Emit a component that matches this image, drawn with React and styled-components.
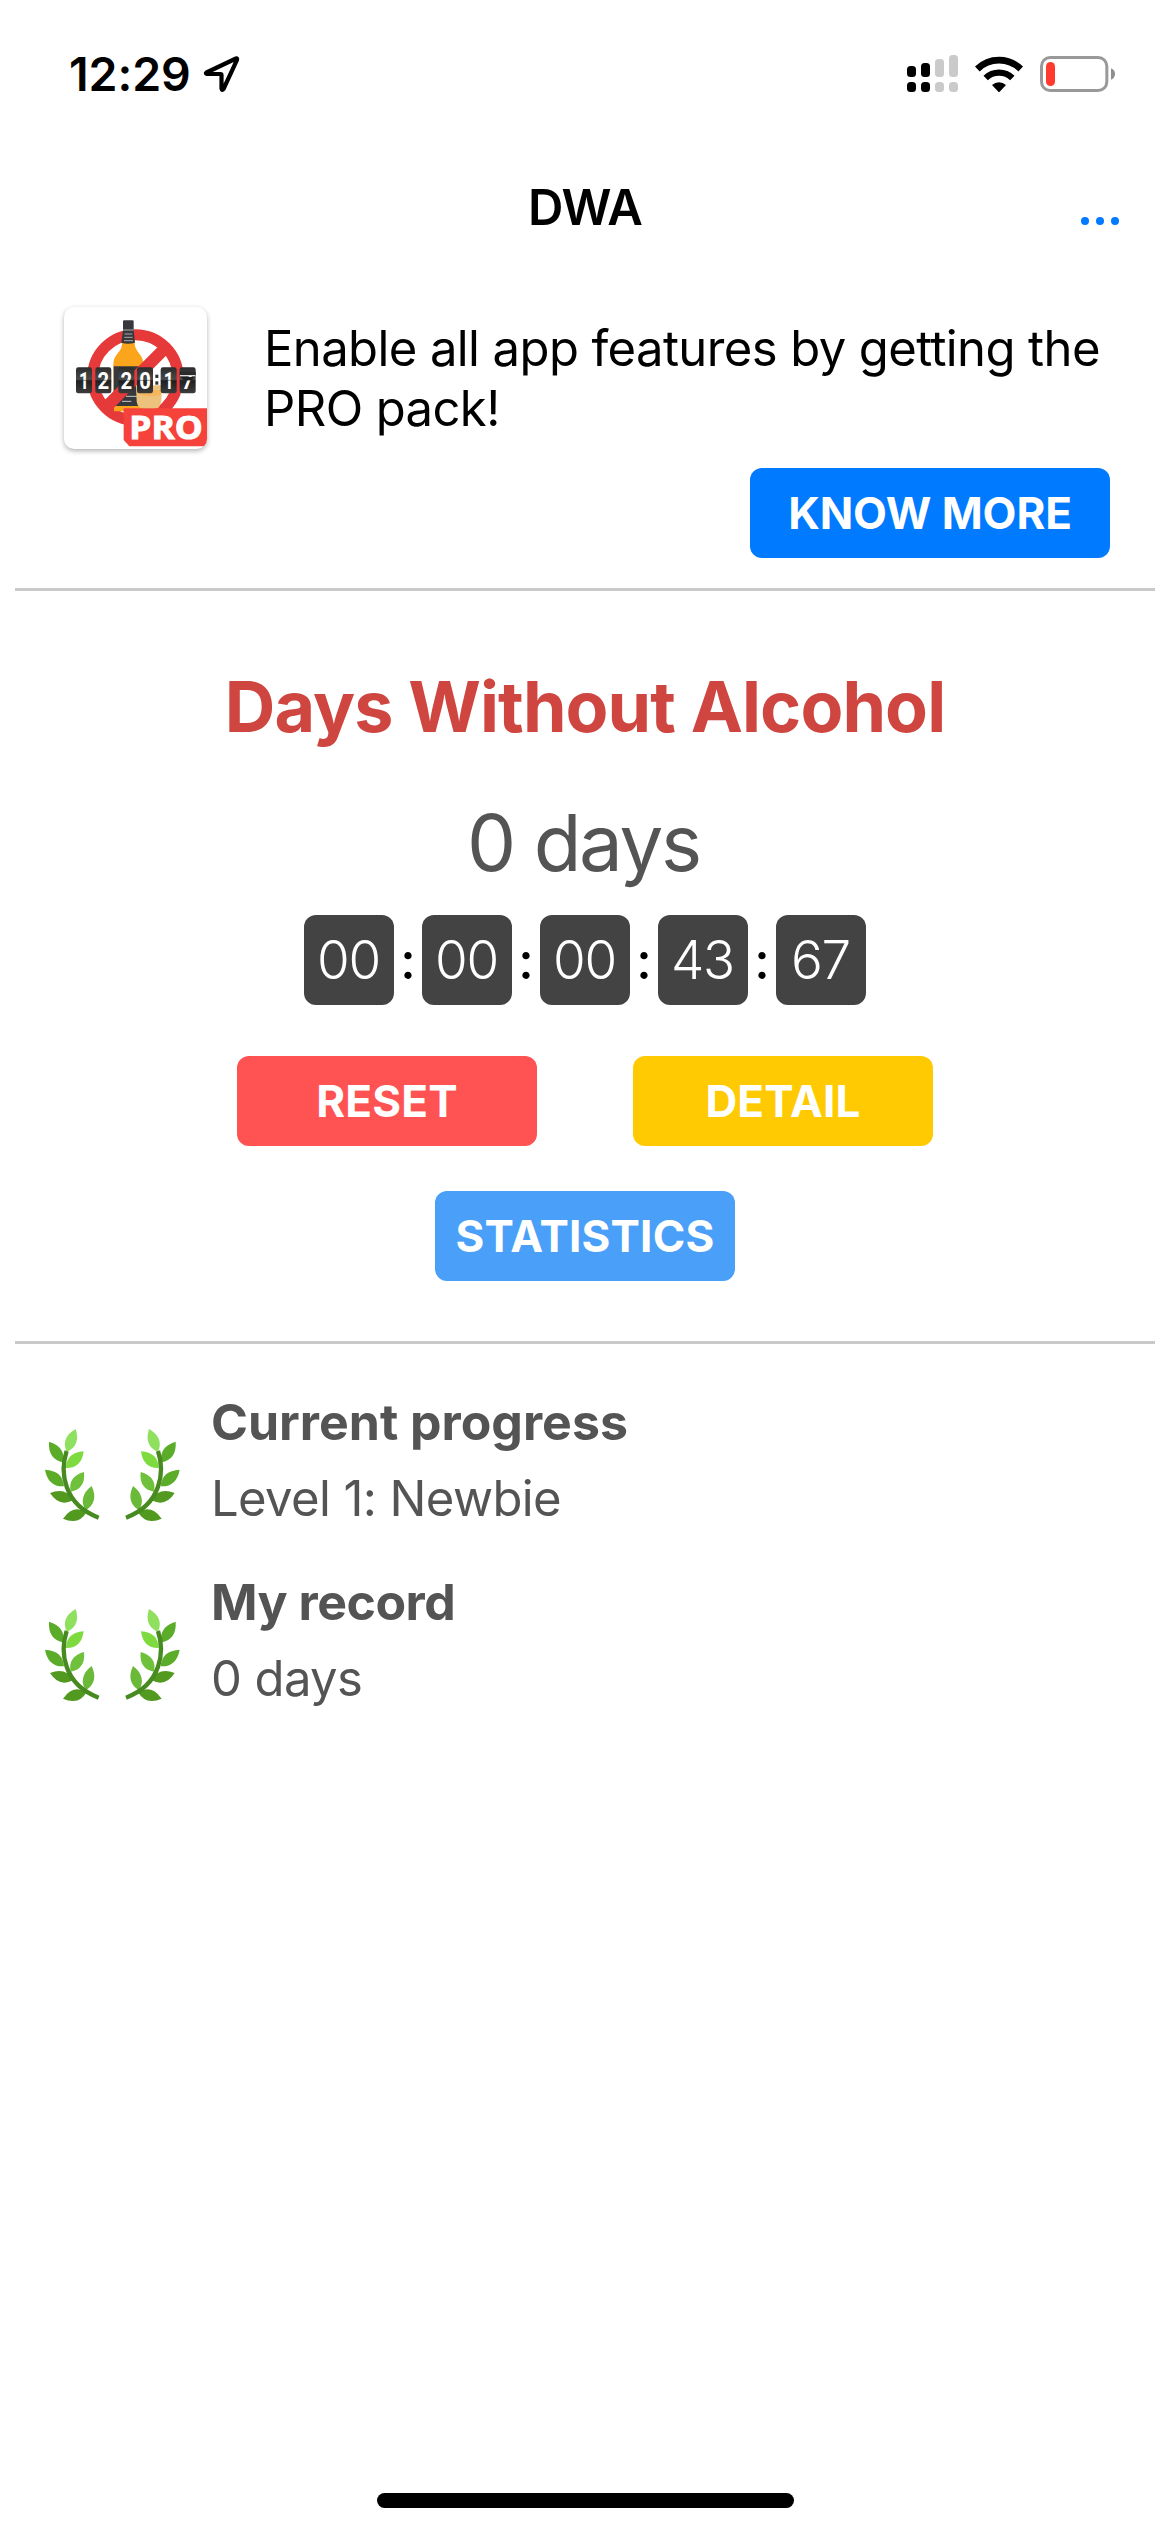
import React from "react";
import styled, { createGlobalStyle } from "styled-components";

const GlobalStyle = createGlobalStyle`
  * {
    box-sizing: border-box;
  }

  body {
    margin: 0;
    background-color: #fff;
    font-family: Inter, "Liberation Sans", sans-serif;
  }
`;

const Screen = styled.div`
  width: 1170px;
  height: 2532px;
  display: flex;
  flex-direction: column;
  background-color: #fff;
  color: #000;
  overflow: hidden;
`;

const StatusBar = styled.header`
  height: 150px;
  padding: 44px 54px 0 69px;
  display: flex;
  justify-content: space-between;
  align-items: flex-start;
`;

const StatusGroup = styled.div`
  height: 60px;
  display: flex;
  align-items: center;
`;

const IconGroup = styled(StatusGroup)`
  svg:nth-child(2) {
    margin-left: 16px;
  }
  svg:nth-child(3) {
    margin-left: 17px;
  }
`;

const Clock = styled.span`
  width: 134px;
  font-size: 46.5px;
  font-weight: 600;
  line-height: 61px;
  letter-spacing: -0.1px;
  white-space: nowrap;
`;

const NavBar = styled.nav`
  height: 132px;
  padding: 0 51px;
  display: grid;
  grid-template-columns: 1fr auto 1fr;
`;

const NavTitle = styled.h1`
  grid-column: 2;
  margin: 28px 0 0;
  font-size: 49px;
  font-weight: 600;
  line-height: 60px;
  letter-spacing: -1px;
`;

const MoreButton = styled.button`
  justify-self: end;
  height: 9px;
  margin-top: 67px;
  padding: 0;
  display: flex;
  gap: 7px;
  border: 0;
  background: none;
`;

const Dot = styled.i`
  width: 8px;
  height: 8px;
  border-radius: 50%;
  background-color: #007aff;
`;

const Promo = styled.section`
  height: 309px;
  margin: 0 15px;
  padding: 25px 45px 0 49px;
  display: flex;
  align-items: flex-start;
  border-bottom: 3px solid #cacaca;
`;

const AppIcon = styled.div`
  width: 143px;
  height: 142px;
  border-radius: 10px;
  background-color: #fff;
  box-shadow: 0 2px 5px rgba(0, 0, 0, 0.3);
  flex: none;
  overflow: hidden;
`;

const PromoBody = styled.div`
  flex: 1;
  margin-left: 57px;
  display: flex;
  flex-direction: column;
`;

const PromoText = styled.p`
  margin: 12px 0 0;
  font-size: 49px;
  line-height: 60px;
  letter-spacing: -0.6px;
  white-space: nowrap;
`;

const Button = styled.button`
  width: ${(props) => props.$width || 300}px;
  height: 90px;
  padding: 0;
  border: 0;
  border-radius: 12px;
  background-color: ${(props) => props.$color};
  color: #fff;
  font-family: inherit;
  font-size: 44px;
  font-weight: 700;
  line-height: 90px;
  letter-spacing: 0.2px;
  white-space: nowrap;
`;

const KnowMore = styled(Button)`
  align-self: flex-end;
  margin-top: 29px;
  letter-spacing: -0.1px;
`;

const Counter = styled.section`
  height: 753px;
  margin: 0 15px;
  display: flex;
  flex-direction: column;
  align-items: center;
  border-bottom: 3px solid #cacaca;
`;

const Title = styled.h2`
  margin: 71px 0 0;
  color: #cf4640;
  font-size: 70px;
  font-weight: 700;
  line-height: 90px;
  letter-spacing: -0.9px;
  white-space: nowrap;
`;

const Days = styled.p`
  margin: 41px 0 0;
  padding-right: 3px;
  color: #545454;
  font-size: 78px;
  line-height: 100px;
  letter-spacing: -2.3px;
`;

const Timer = styled.div`
  height: 90px;
  margin-top: 22px;
  display: flex;
`;

const Digits = styled.span`
  width: 90px;
  height: 90px;
  padding-right: 1px;
  border-radius: 12px;
  background-color: #434343;
  color: #fff;
  font-size: 53px;
  font-weight: 350;
  line-height: 91px;
  letter-spacing: -1.3px;
  text-align: center;
`;

const Colon = styled.span`
  width: 28px;
  font-size: 51px;
  font-weight: 500;
  line-height: 92px;
  display: flex;
  justify-content: center;
`;

const ButtonRow = styled.div`
  margin-top: ${(props) => props.$top}px;
  display: flex;
  gap: 96px;
`;

const Levels = styled.section`
  padding: 42px 45px 0;
  flex: 1;
`;

const Level = styled.div`
  height: 180px;
  display: flex;
`;

const LevelText = styled.div`
  margin-left: 31px;
  color: #545454;
  font-size: 49px;
`;

const LevelName = styled.h3`
  margin: 6px 0 0;
  font-size: 50px;
  font-weight: 700;
  line-height: 60px;
  letter-spacing: ${(props) => props.$spacing}px;
`;

const LevelValue = styled.p`
  margin: 17px 0 0;
  line-height: 60px;
  letter-spacing: -0.6px;
`;

const LaurelSvg = styled.svg`
  width: 135px;
  height: 92px;
  margin-top: 43px;
  display: block;
`;

const HomeIndicator = styled.div`
  width: 417px;
  height: 15px;
  margin: 0 auto 24px;
  border-radius: 8px;
  background-color: #000;
`;

const LocationIcon = () => (
  <svg width="38" height="38" viewBox="0 0 38 38">
    <path
      d="M3.5 17.5 L33 3.5 Q34.5 3 34 4.8 L20.5 34 Q19 36 18.5 33.5 L18.5 20 Q18.5 19 17.5 19 L4 19 Q2 18.5 3.5 17.5 Z"
      fill="none"
      stroke="#000"
      strokeWidth="4.2"
      strokeLinejoin="round"
    />
  </svg>
);

const SignalIcon = () => (
  <svg width="52" height="38" viewBox="0 0 52 38">
    <g fill="#000">
      <rect x="0" y="11" width="9" height="11" rx="3.5" />
      <rect x="14" y="8" width="9" height="14" rx="3.5" />
      <rect x="0" y="27" width="9" height="10" rx="3.5" />
      <rect x="14" y="27" width="9" height="10" rx="3.5" />
    </g>
    <g fill="#cacaca">
      <rect x="28" y="4" width="9" height="18" rx="3.5" />
      <rect x="42" y="0" width="9" height="22" rx="3.5" />
      <rect x="28" y="27" width="9" height="10" rx="3.5" />
      <rect x="42" y="27" width="9" height="10" rx="3.5" />
    </g>
  </svg>
);

const WifiIcon = () => (
  <svg width="48" height="36" viewBox="0 0 144 108">
    <g fill="none" stroke="#000">
      <path d="M7 39 A93 93 0 0 1 137 39" strokeWidth="20" />
      <path d="M32 66 A58 58 0 0 1 112 66" strokeWidth="19" />
    </g>
    <path d="M51 87 A31 31 0 0 1 93 87 L74 107 Q72 109 70 107 Z" />
  </svg>
);

const BatteryIcon = () => (
  <svg width="76" height="36" viewBox="0 0 228 108">
    <rect x="4.5" y="4.5" width="196" height="99" rx="26" fill="none" stroke="#999" strokeWidth="9" />
    <rect x="18" y="18" width="27" height="72" rx="13" fill="#ff3b30" />
    <path d="M213 37 Q225 42 225 54 Q225 66 213 71 Z" fill="#8e8e8e" />
  </svg>
);

const flaps = [
  { x: 76, text: "1" },
  { x: 134, text: "2" },
  { x: 203, text: "2" },
  { x: 259, text: "0" },
  { x: 330, text: "1" },
  { x: 387, text: "7" },
];

const ProIcon = () => (
  <svg width="143" height="142" viewBox="40 35 429 426">
    <defs>
      <linearGradient id="flap" x1="0" y1="0" x2="0" y2="1">
        <stop offset="0" stopColor="#2c2c2c" />
        <stop offset="0.48" stopColor="#4a4a4a" />
        <stop offset="0.52" stopColor="#202020" />
        <stop offset="1" stopColor="#3c3c3c" />
      </linearGradient>
    </defs>
    <circle cx="254" cy="246" r="128" fill="none" stroke="#e5393a" strokeWidth="33" />
    <path
      d="M215 130 L251 130 L252 146 Q254 162 266 175 Q278 188 278 208 L278 348 L190 348 L188 208 Q188 188 200 175 Q213 162 214 146 Z"
      fill="#fba51c"
    />
    <path d="M189 213 L278 213 L278 332 L189 332 Z" fill="#35383c" />
    <path d="M217 78 Q217 75 221 75 L245 75 Q249 75 249 78 L249 104 L253 142 Q233 148 212 142 L217 104 Z" fill="#36383c" />
    <path d="M217 104 L249 104 M222 116 L245 116 M221 126 L246 126 M220 136 L247 136" stroke="#aaa" strokeWidth="3" />
    <path d="M344 158 L166 336" stroke="#e5393a" strokeWidth="36" />
    <path d="M226 303 L262 303 M214 318 L242 318" stroke="#c9c9c9" strokeWidth="3" />
    <path d="M256 270 L334 270 L332 316 Q328 340 314 340 L276 340 Q260 338 258 318 Z" fill="#edc27c" />
    <path d="M258 284 L332 284 L331 298 Q300 310 258 294 Z" fill="#f3b65c" />
    {flaps.map((flap) => (
      <g key={flap.x}>
        <rect x={flap.x} y="216" width="48" height="78" rx="7" fill="url(#flap)" />
        <text
          x={flap.x + 24}
          y="280"
          fill="#fff"
          fontFamily="Roboto, sans-serif"
          fontSize="73"
          fontWeight="700"
          textAnchor="middle"
          textLength={flap.text === "1" ? 30 : 35}
          lengthAdjust="spacingAndGlyphs"
        >
          {flap.text}
        </text>
        <path d={`M${flap.x} 255 h48`} stroke="#222" strokeWidth="1.5" />
      </g>
    ))}
    <path d="M387 229 L435 229 L435 240 L387 240 Z" fill="#2b2b2b" />
    <path d="M388 241 L434 241" stroke="#ddd" strokeWidth="4" />
    <path d="M391 245 L431 245 L425 254 L399 254 Z" fill="#222" />
    <rect x="314" y="238" width="9" height="10" fill="#333" />
    <rect x="314" y="258" width="9" height="10" fill="#333" />
    <path d="M219 339 L469 339 L469 453 L236 453 L219 434 Z" fill="#f5433b" />
    <text
      x="236"
      y="431"
      fill="#fff"
      stroke="#fff"
      strokeWidth="3"
      fontFamily="Open Sans, sans-serif"
      fontSize="97"
      fontWeight="700"
      textLength="220"
      lengthAdjust="spacingAndGlyphs"
    >
      PRO
    </text>
  </svg>
);

const leaves = [
  { base: [110, 127], tip: [137, 58], color: "#8fe05f" },
  { base: [108, 175], tip: [161, 125], color: "#7ddb40" },
  { base: [100, 158], tip: [57, 96], color: "#5aac29" },
  { base: [122, 246], tip: [162, 187], color: "#6fc03a" },
  { base: [102, 230], tip: [45, 180], color: "#5aac29" },
  { base: [167, 302], tip: [185, 229], color: "#6ab938" },
  { base: [129, 272], tip: [60, 250], color: "#51991f" },
  { base: [170, 307], tip: [99, 327], color: "#51991f" },
];

const leafPath = ([x1, y1], [x2, y2]) => {
  const dx = x2 - x1;
  const dy = y2 - y1;
  const k = 33 / Math.hypot(dx, dy);
  const cx = x1 + dx * 0.45;
  const cy = y1 + dy * 0.45;
  return `M${x1} ${y1} Q${cx - dy * k} ${cy + dx * k} ${x2} ${y2} Q${cx + dy * k} ${cy - dx * k} ${x1} ${y1} Z`;
};

const Branch = () => (
  <>
    {leaves.map((leaf, i) => (
      <path key={i} d={leafPath(leaf.base, leaf.tip)} fill={leaf.color} />
    ))}
    <path d="M110 124 C90 184 98 284 206 324" fill="none" stroke="#468a20" strokeWidth="13" />
  </>
);

const Laurel = () => (
  <LaurelSvg viewBox="45 58 405 276">
    <Branch />
    <g transform="translate(494 0) scale(-1 1)">
      <Branch />
    </g>
  </LaurelSvg>
);

const timer = ["00", "00", "00", "43", "67"];

const levels = [
  { name: "Current progress", value: "Level 1: Newbie", spacing: 0 },
  { name: "My record", value: "0 days", spacing: -0.5 },
];

const App = () => {
  return (
    <>
      <GlobalStyle />
      <Screen>
        <StatusBar>
          <StatusGroup>
            <Clock>12:29</Clock>
            <LocationIcon />
          </StatusGroup>
          <IconGroup>
            <SignalIcon />
            <WifiIcon />
            <BatteryIcon />
          </IconGroup>
        </StatusBar>
        <NavBar>
          <NavTitle>DWA</NavTitle>
          <MoreButton aria-label="More">
            <Dot />
            <Dot />
            <Dot />
          </MoreButton>
        </NavBar>
        <Promo>
          <AppIcon>
            <ProIcon />
          </AppIcon>
          <PromoBody>
            <PromoText>
              Enable all app features by getting the
              <br />
              PRO pack!
            </PromoText>
            <KnowMore $color="#007aff" $width={360}>
              KNOW MORE
            </KnowMore>
          </PromoBody>
        </Promo>
        <Counter>
          <Title>Days Without Alcohol</Title>
          <Days>0 days</Days>
          <Timer>
            {timer.map((item, i) => (
              <React.Fragment key={i}>
                {i > 0 && <Colon>:</Colon>}
                <Digits>{item}</Digits>
              </React.Fragment>
            ))}
          </Timer>
          <ButtonRow $top={51}>
            <Button $color="#ff5252">RESET</Button>
            <Button $color="#ffca02">DETAIL</Button>
          </ButtonRow>
          <ButtonRow $top={45}>
            <Button $color="#4a9ff9">STATISTICS</Button>
          </ButtonRow>
        </Counter>
        <Levels>
          {levels.map((item) => (
            <Level key={item.name}>
              <Laurel />
              <LevelText>
                <LevelName $spacing={item.spacing}>{item.name}</LevelName>
                <LevelValue>{item.value}</LevelValue>
              </LevelText>
            </Level>
          ))}
        </Levels>
        <HomeIndicator />
      </Screen>
    </>
  );
};

export default App;
